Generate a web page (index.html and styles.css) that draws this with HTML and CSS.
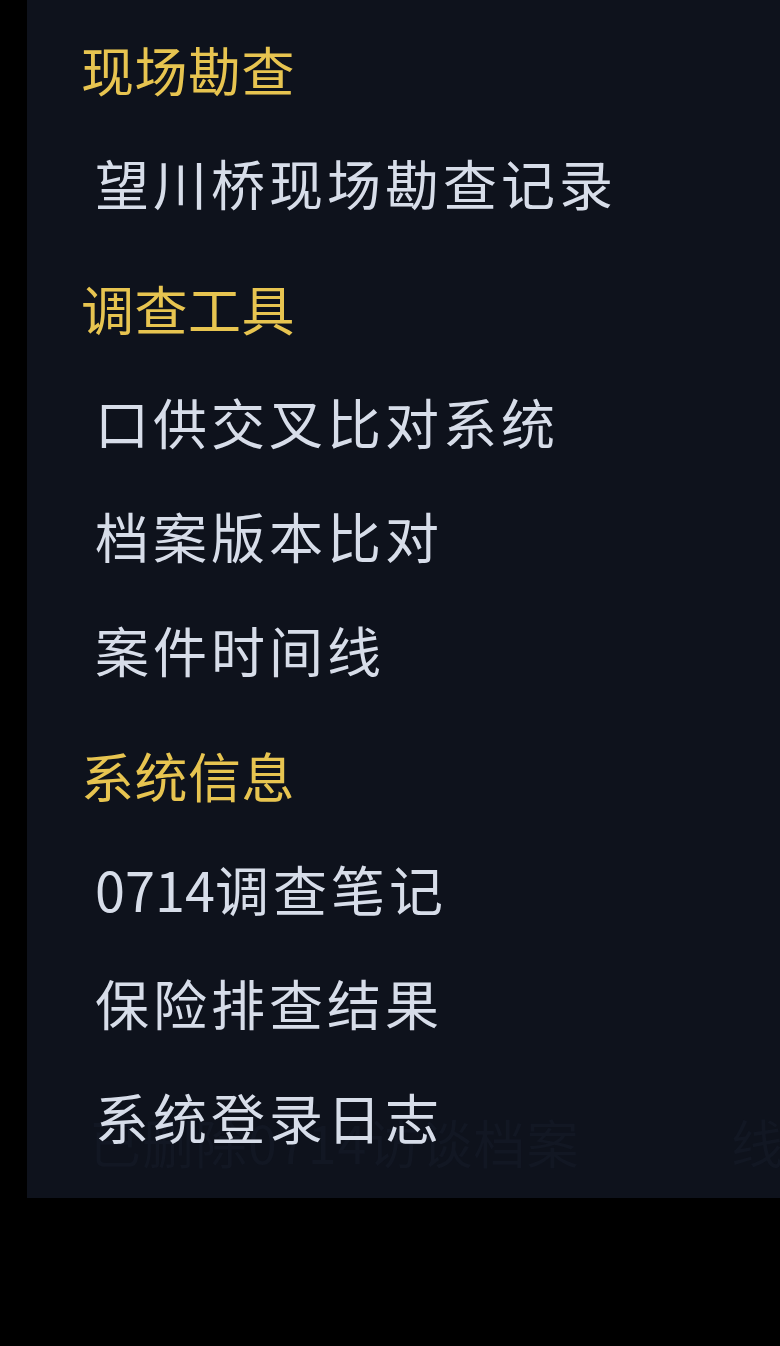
FILE: index.html
```html
<!DOCTYPE html>
<html lang="zh-CN">
<head>
<meta charset="utf-8">
<title>菜单</title>
<link rel="stylesheet" href="styles.css">
</head>
<body>
<div class="panel">
  <div class="ghost">
    <span class="ghost-a">已删除0714访谈档案</span>
    <span class="ghost-b">线</span>
  </div>
  <div class="section">
    <div class="heading">现场勘查</div>
    <div class="item">望川桥现场勘查记录</div>
  </div>
  <div class="section">
    <div class="heading">调查工具</div>
    <div class="item">口供交叉比对系统</div>
    <div class="item">档案版本比对</div>
    <div class="item">案件时间线</div>
  </div>
  <div class="section">
    <div class="heading">系统信息</div>
    <div class="item"><span class="num">0714</span>调查笔记</div>
    <div class="item">保险排查结果</div>
    <div class="item">系统登录日志</div>
  </div>
</div>
</body>
</html>
```

FILE: styles.css
```css
html, body {
  margin: 0;
  padding: 0;
  background: #000;
}
body {
  width: 780px;
  height: 1346px;
  overflow: hidden;
  font-family: "Noto Sans CJK SC", "Noto Sans", sans-serif;
}
.panel {
  position: relative;
  margin-left: 27px;
  width: 753px;
  box-sizing: border-box;
  padding: 1px 0 24px 54px;
  background: #0e121c;
}
.section {
  display: flex;
  flex-direction: column;
}
.heading {
  position: relative;
  margin-top: 11px;
  font-size: 53px;
  line-height: 114px;
  letter-spacing: 0.5px;
  color: #e7c450;
  font-weight: 400;
}
.item {
  position: relative;
  padding-left: 14px;
  font-size: 54px;
  line-height: 114px;
  letter-spacing: 4px;
  color: #d7dde9;
}
.num {
  letter-spacing: 0;
}
.ghost {
  position: absolute;
  left: 62px;
  top: 1112px;
  width: 691px;
  font-size: 52px;
  line-height: 60px;
  letter-spacing: 1px;
  color: #121723;
  white-space: nowrap;
}
.ghost-b {
  position: absolute;
  left: 642px;
  top: 0;
}
```
